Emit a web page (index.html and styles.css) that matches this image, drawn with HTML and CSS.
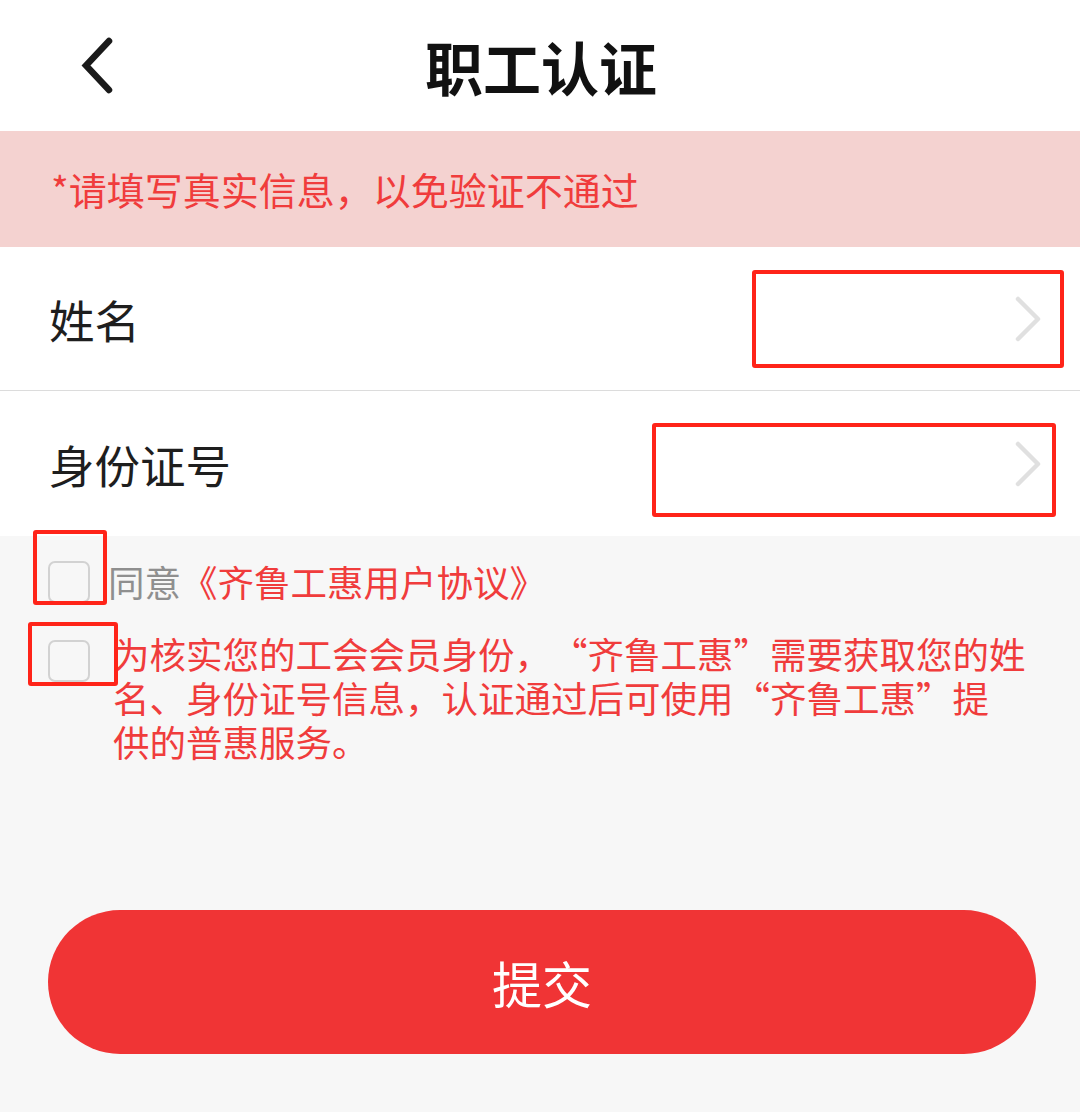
FILE: index.html
```html
<!DOCTYPE html>
<html lang="zh-CN">
<head>
<meta charset="utf-8">
<title>职工认证</title>
<link rel="stylesheet" href="styles.css">
</head>
<body>
<div class="page">
  <header class="topbar">
    <div class="back">
      <svg width="40" height="60" viewBox="0 0 40 60"><polyline points="29,5 6,29.5 29,54" fill="none" stroke="#1a1a1a" stroke-width="6.5" stroke-linecap="round" stroke-linejoin="miter"/></svg>
    </div>
    <h1 class="title">职工认证</h1>
    <div class="spacer"></div>
  </header>

  <div class="notice">*请填写真实信息，以免验证不通过</div>

  <div class="form">
    <div class="row row-name">
      <span class="label">姓名</span>
      <svg class="chev" width="27" height="46" viewBox="0 0 27 46"><polyline points="3,3 23,23 3,43" fill="none" stroke="#e0e0e0" stroke-width="4.5" stroke-linecap="round" stroke-linejoin="round"/></svg>
      <span class="mark mark-name"></span>
    </div>
    <div class="row row-id">
      <span class="label">身份证号</span>
      <svg class="chev" width="27" height="46" viewBox="0 0 27 46"><polyline points="3,3 23,23 3,43" fill="none" stroke="#e0e0e0" stroke-width="4.5" stroke-linecap="round" stroke-linejoin="round"/></svg>
      <span class="mark mark-id"></span>
    </div>
  </div>

  <div class="agree">
    <div class="agree-row agree-first">
      <span class="check"><span class="mark mark-c1"></span></span>
      <span class="agree-text"><span class="grey">同意</span>《齐鲁工惠用户协议》</span>
    </div>
    <div class="agree-row agree-second">
      <span class="check check-top"><span class="mark mark-c2"></span></span>
      <p class="para">为核实您的工会会员身份，“齐鲁工惠”需要获取您的姓<br>名、身份证号信息，认证通过后可使用“齐鲁工惠”提<br>供的普惠服务。</p>
    </div>
  </div>

  <button class="submit" type="button">提交</button>
</div>
</body>
</html>
```

FILE: styles.css
```css
* { box-sizing: border-box; }
html, body { margin: 0; padding: 0; }
body {
  width: 1080px;
  height: 1112px;
  overflow: hidden;
  background: #f7f7f7;
  font-family: "Noto Sans CJK SC", "Noto Sans", sans-serif;
  text-spacing-trim: space-all;
}
.page { width: 1080px; }

.topbar {
  height: 131px;
  background: #ffffff;
  display: grid;
  grid-template-columns: 1fr auto 1fr;
  align-items: center;
}
.back { padding-left: 80px; display: flex; align-items: center; height: 60px; }
.back svg { display: block; }
.title {
  margin: 0;
  font-size: 58px;
  font-weight: 700;
  color: #111111;
  line-height: 1;
  padding-left: 2px;
}

.notice {
  height: 116px;
  background: #f4d2d0;
  color: #f03c3c;
  font-size: 38px;
  display: flex;
  align-items: center;
  padding-left: 51px;
  padding-bottom: 2px;
}

.form { background: #ffffff; }
.row {
  position: relative;
  display: flex;
  align-items: center;
  justify-content: space-between;
  padding: 0 38px 0 49px;
}
.row-name { height: 144px; border-bottom: 1px solid #dcdcdc; }
.row-id { height: 145px; }
.label { font-size: 45.5px; color: #1e1e1e; }
.chev { display: block; }

.mark {
  position: absolute;
  border: 4px solid #ff2419;
  border-radius: 3px;
}
.mark-name { left: 752px; top: 23px; width: 312px; height: 98px; }
.mark-id { left: 652px; top: 32px; width: 404px; height: 94px; }

.agree { padding-left: 48px; }
.agree-row { display: flex; }
.agree-first { margin-top: 24px; height: 44px; align-items: center; }
.agree-second { margin-top: 28px; align-items: flex-start; }

.check {
  position: relative;
  width: 42px;
  height: 42px;
  flex: none;
  border: 2px solid #d2d2d2;
  border-radius: 7px;
}
.check-top { margin-top: 8px; }
.mark-c1 { left: -17px; top: -33px; width: 74px; height: 75px; }
.mark-c2 { left: -22px; top: -20px; width: 90px; height: 64px; }

.agree-text {
  margin-left: 18px;
  font-size: 36.5px;
  line-height: 44px;
  color: #f03c3c;
}
.grey { color: #8f8f8f; }
.para {
  margin: 0 0 0 23px;
  font-size: 36.5px;
  line-height: 44px;
  color: #f03c3c;
}

.submit {
  display: flex;
  align-items: center;
  justify-content: center;
  margin: 146px 0 0 48px;
  width: 988px;
  height: 144px;
  border: none;
  border-radius: 72px;
  background: #f03435;
  color: #ffffff;
  font-family: "Noto Sans CJK SC", "Noto Sans", sans-serif;
  font-size: 50px;
  padding: 0;
}
```
